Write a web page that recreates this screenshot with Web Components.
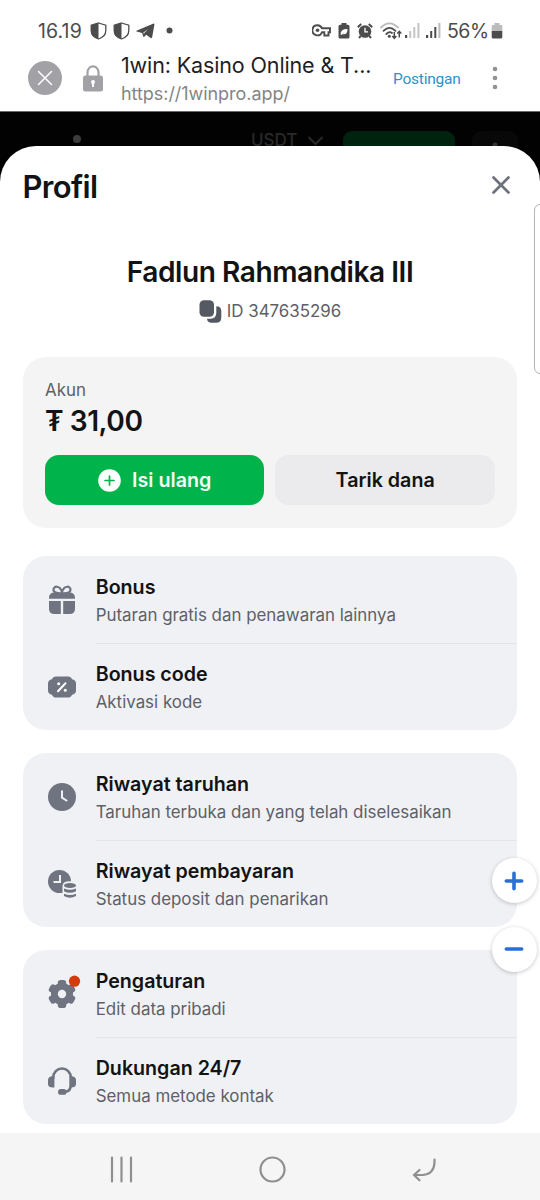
<!DOCTYPE html>
<html lang="id">
<head>
<meta charset="utf-8">
<title>Profil</title>
<style>
html,body{margin:0;padding:0}
body{width:540px;height:1200px;overflow:hidden;background:#fff;font-family:Inter,"Noto Sans",sans-serif;color:#121314}
</style>
</head>
<body>
<profile-app></profile-app>
<script>
function define(name, css, html) {
  const t = document.createElement('template');
  t.innerHTML = '<style>:host{display:block;box-sizing:border-box}*{box-sizing:border-box}svg{display:block;flex:none}' + css + '</style>' + html;
  customElements.define(name, class extends HTMLElement {
    constructor() {
      super();
      this.attachShadow({mode: 'open'}).appendChild(t.content.cloneNode(true));
    }
  });
}

define('status-bar', `
:host{height:48px;padding:14px 37px 0 38px}
.row{display:flex;align-items:center;height:33px;color:#4c4c4c;font-size:19.5px}
.time{width:52px;letter-spacing:.1px}
.pct{letter-spacing:-.5px;width:43px;white-space:nowrap}
svg{fill:#4c4c4c}
.sp{flex:1}
`, `<div class="row">
<span class="time">16.19</span>
<svg width="17" height="18" viewBox="0 0 17 18"><path d="M8.500 1 15.800 3.200V8.600C15.800 13 12.400 15.800 8.500 17 4.600 15.800 1.200 13 1.200 8.600V3.200Z" fill="none" stroke="#4c4c4c" stroke-width="1.300"/><path d="M8.500 1V17C4.600 15.800 1.200 13 1.200 8.600V3.200Z"/></svg>
<svg width="17" height="18" viewBox="0 0 17 18" style="margin-left:6px"><path d="M8.500 1 15.800 3.200V8.600C15.800 13 12.400 15.800 8.500 17 4.600 15.800 1.200 13 1.200 8.600V3.200Z" fill="none" stroke="#4c4c4c" stroke-width="1.300"/><path d="M8.500 1V17C4.600 15.800 1.200 13 1.200 8.600V3.200Z"/></svg>
<svg width="19" height="16" viewBox="0 0 19 16" style="margin-left:6px"><path d="M.6 8.600Q-.1 8 1 7.500L17 .7Q18.600.2 18.400 1.800L16.200 14Q15.800 15.800 14.300 14.800L10.200 11.800 8.300 13.700Q7.500 14.400 7.200 13.300L6.100 9.900ZM7.300 9.600 8 11.200 8.400 9.800 12.300 6.200Z" fill-rule="evenodd"/></svg>
<svg width="7" height="7" viewBox="0 0 7 7" style="margin-left:11px"><circle cx="3.500" cy="3.500" r="3"/></svg>
<span class="sp"></span>
<svg width="19" height="13" viewBox="0 0 19 13"><path d="M5.500 1.300a5 5 0 1 0 4.500 7h2.300V11.500h4.200V8.300H18V4.300H10A5 5 0 0 0 5.500 1.300Z" fill="none" stroke="#4c4c4c" stroke-width="1.900"/><circle cx="5.500" cy="6.300" r="1.800"/></svg>
<svg width="12" height="16" viewBox="0 0 12 16" style="margin-left:7px"><path d="M3.500 0h5v1.700H10q1.500 0 1.500 1.500V14q0 1.500-1.500 1.500H2Q.5 15.500.5 14V3.200q0-1.500 1.500-1.500h1.500Z"/><path d="M2.700 11.800Q1.900 6 9.500 6 9.700 12 4.600 11.200L7.300 8.300 3.500 12Z" fill="#fff"/></svg>
<svg width="16" height="16" viewBox="0 0 16 16" style="margin-left:7px"><circle cx="8" cy="8.500" r="6.300"/><path d="M.8 4.200 4.200 1M15.200 4.200 11.800 1M3.800 12.800 2 15M12.200 12.800 14 15" stroke="#4c4c4c" stroke-width="2"/><path d="M8 4.700V8.800H11" stroke="#fff" stroke-width="1.300" fill="none"/></svg>
<svg width="23" height="18" viewBox="0 0 23 18" style="margin-left:7px" ><g fill="none" stroke-linecap="round" stroke-width="1.800"><path d="M1 5.500Q9.500-2.700 18 5.500" stroke="#bbb"/><path d="M3.500 8.800Q9.500 3 15.500 8.800M6.300 12Q9.500 8.900 12 11" stroke="#4c4c4c"/></g><circle cx="9.300" cy="14.300" r="1.500"/><path d="M14.300 10v6M12.300 14l2 2.300 2-2.300M19.300 15.500V9.500M17.300 11.600l2-2.300 2 2.300" fill="none" stroke="#4c4c4c" stroke-width="1.500"/></svg>
<svg width="15" height="15" viewBox="0 0 15 15" style="margin-left:2px"><path d="M0 12h2.200v3H0Z"/><path d="M4.200 8h2v7h-2ZM8.300 4h2v11h-2ZM12.400 0h2v15h-2Z" fill="#c4c4c4"/></svg>
<svg width="15" height="15" viewBox="0 0 15 15" style="margin-left:6px"><path d="M0 12h2.200v3H0ZM4.200 8h2v7h-2ZM8.300 4h2v11h-2Z"/><path d="M12.400 0h2v15h-2Z" fill="#bbb"/></svg>
<span class="pct" style="margin-left:6px">56%</span>
<svg width="12" height="16" viewBox="0 0 12 16" style="margin-left:1px"><path d="M3.500 0h5v2H10q1.300 0 1.300 1.300V8H.7V3.300Q.7 2 2 2h1.500Z" fill="#bbb"/><path d="M.7 8H11.300v6q0 1.500-1.500 1.500H2.200Q.7 15.500.7 14Z"/></svg>
</div>`);

define('browser-bar', `
:host{height:64px;border-bottom:1px solid #6a6a6a}
.row{display:flex;align-items:center;height:60px;padding-left:28px}
.txt{margin-left:18px;width:272px;white-space:nowrap;padding-top:3px}
.t{font-size:21.500px;line-height:28px;color:#1e1e1e;letter-spacing:-.13px}
.u{font-size:18px;line-height:29px;color:#858585;letter-spacing:-.05px}
.p{font:15.500px/20px Roboto,sans-serif;color:#2b93ca;width:95px;letter-spacing:-.22px;padding-top:2px}
`, `<div class="row">
<svg width="34" height="34" viewBox="0 0 34 34"><circle cx="17" cy="17" r="17" fill="#a2a1a6"/><path d="M10.500 10.500l13 13M23.500 10.500l-13 13" stroke="#fff" stroke-width="1.500" stroke-linecap="round"/></svg>
<svg width="20" height="27" viewBox="0 0 20 27" style="margin-left:21px"><path d="M4.500 12V7.500a5.500 6.200 0 0 1 11 0V12" fill="none" stroke="#a2a1a6" stroke-width="2.200"/><rect y="10.500" width="20" height="16" rx="2.500" fill="#a2a1a6"/><circle cx="10" cy="17" r="2" fill="#fff"/><path d="M9 17h2v5H9Z" fill="#fff"/></svg>
<div class="txt"><div class="t">1win: Kasino Online &amp; T...</div><div class="u">https://1winpro.app/</div></div>
<div class="p">Postingan</div>
<svg width="8" height="24" viewBox="0 0 8 24" fill="#929292" style="margin-left:3px"><circle cx="4" cy="3" r="2.300"/><circle cx="4" cy="12" r="2.300"/><circle cx="4" cy="21" r="2.300"/></svg>
</div>`);

define('dimmed-header', `
:host{height:69px;background:#020202;overflow:hidden}
.row{display:flex;align-items:flex-start;padding:19px 22px 0 73px;height:69px}
.c{margin:0 0 0 170px;font-size:17px;line-height:19px;font-weight:500;color:#292929;width:56px}
.g{width:113px;height:44px;border-radius:9px;background:#00230f;margin-left:19px}
.b{width:46px;height:44px;border-radius:9px;background:#080808;margin-left:17px;display:flex;justify-content:center;padding-top:11px}
`, `<div class="row"><svg width="8" height="16" viewBox="0 0 8 16"><circle cx="4" cy="8" r="4" fill="#3c3c3c"/></svg><span class="c">USDT</span><svg width="17" height="18" viewBox="0 0 17 18"><path d="M1.500 6l7 7 7-7" fill="none" stroke="#292929" stroke-width="2"/></svg><span class="g"></span><span class="b"><svg width="6" height="6" viewBox="0 0 6 6"><circle cx="3" cy="3" r="2.500" fill="#333"/></svg></span></div>`);

define('account-card', `
:host{margin:0 22.600px 0 22.500px;height:171px;background:#f4f4f4;border-radius:23px;padding:20px 22.500px 0}
.l{font-size:16.900px;line-height:26px;color:#5d6067}
.a{font-size:28.100px;line-height:36px;font-weight:600;letter-spacing:-.45px}
.btns{display:flex;gap:11px;margin-top:16px}
.btn{flex:1;height:50.500px;border-radius:14px;display:flex;align-items:center;justify-content:center;font-size:19.700px;font-weight:600;background:#ebebed}
.btn.g{background:#00b34a;color:#f2fff6;gap:11px}
`, `<div class="l">Akun</div><div class="a">₮ 31,00</div>
<div class="btns"><div class="btn g"><svg width="23" height="23" viewBox="0 0 23 23"><circle cx="11.500" cy="11.500" r="11.300" fill="#fff"/><path d="M11.500 7v9M7 11.500h9" stroke="#00b34a" stroke-width="1.700" stroke-linecap="round"/></svg><span>Isi ulang</span></div><div class="btn"><span>Tarik dana</span></div></div>`);

define('menu-group', `
:host{margin:0 22.600px 0 22.500px;background:#f0f1f5;border-radius:23px;height:174px}
`, `<slot></slot>`);

define('menu-row', `
:host{height:87px;display:flex;padding-left:25px}
.ic{width:28px;height:88px;display:flex;align-items:center;flex:none}
.tx{margin-left:20.200px;flex:1;height:88.400px;padding-top:17.200px;white-space:nowrap}
:host([line]) .tx{border-bottom:1px solid #e4e5e9}
.t{font-size:19.650px;line-height:28px;font-weight:600}
.s{font-size:16.900px;line-height:29px;color:#5d6067}
`, `<div class="ic"><slot name="icon"></slot></div><div class="tx"><div class="t"><slot name="title"></slot></div><div class="s"><slot></slot></div></div>`);

const icons = {
gift: '<path d="M14 7.500C11 7.500 5.500 7 5.500 3.700 5.500 .2 11.500-1.500 14 6 16.500-1.500 22.500 .2 22.500 3.700 22.500 7 17 7.500 14 7.500Z" fill="none" stroke="#707480" stroke-width="2.200"/><path d="M6.500 6.500h15q5.500 0 5.500 5.500v.7H1V12Q1 6.500 6.500 6.500ZM1 15H12.800V28H6.500Q1 28 1 23ZM15.200 15H27v8q0 5-5.500 5H15.200Z"/>',
code: '<path d="M8 3.500H20Q23 3.500 24 6.300 28 7 28 10.500v7Q28 21 24 21.700 23 24.500 20 24.500H8Q5 24.500 4 21.700 0 21 0 17.500v-7Q0 7 4 6.300 5 3.500 8 3.500Z"/><path d="M10 18.200 17.500 10.200" stroke="#fff" stroke-width="2" stroke-linecap="round"/><circle cx="10.700" cy="10.800" r="1.500" fill="#fff"/><circle cx="17.300" cy="17.300" r="1.500" fill="#fff"/>',
clock: '<circle cx="14" cy="14" r="14"/><path d="M14 7.500V14.700L19.200 18" fill="none" stroke="#f0f1f5" stroke-width="2"/>',
pay: '<circle cx="11.500" cy="11.500" r="11.500"/><path d="M12 5V12H5.500" fill="none" stroke="#f0f1f5" stroke-width="2"/><path d="M14.500 16Q14.500 11.300 21.500 11.300T30 16V30H14.500Z" fill="#f0f1f5"/><ellipse cx="22" cy="15.500" rx="6" ry="2.500"/><path d="M16 18.500q6 2.500 12 0v2.700q-6 3-12 0ZM16 23.700q6 2.500 12 0v2.300q-6 3.500-12 0Z"/>',
gear: '<circle cx="14" cy="14" r="11"/><rect x="9.800" width="8.400" height="28" rx="2.800"/><rect x="9.800" width="8.400" height="28" rx="2.800" transform="rotate(60 14 14)"/><rect x="9.800" width="8.400" height="28" rx="2.800" transform="rotate(120 14 14)"/><circle cx="14" cy="14" r="4.200" fill="#f0f1f5"/><circle cx="26.500" cy="1.200" r="5.600" fill="#d43a0c"/>',
head: '<path d="M5.200 12V10.700a8.800 9.200 0 0 1 17.600 0V18Q22.800 24 17.500 24.800H14" fill="none" stroke="#707480" stroke-width="2.600"/><path d="M6.400 9V20.500Q0 21 0 17V13Q0 9 6.400 9ZM21.600 9V20.500Q28 21 28 17V13Q28 9 21.600 9Z"/><rect x="10" y="22" width="8.500" height="5.800" rx="2.900"/>'
};
customElements.define('menu-icon', class extends HTMLElement {
  constructor() { super(); this.attachShadow({mode: 'open'}); }
  connectedCallback() {
    this.shadowRoot.innerHTML = '<style>:host{display:block}svg{display:block;overflow:visible}</style><svg width="28" height="28" viewBox="0 0 28 28" fill="#707480">' + icons[this.getAttribute('name')] + '</svg>';
  }
});

define('profile-sheet', `
:host{position:relative;margin-top:-35.500px;height:987px;background:#fff;border-radius:36px 36px 0 0;padding-top:21px}
.head{display:flex;justify-content:space-between;align-items:center;height:40px;padding:0 30.500px 0 22.500px}
h1{margin:0;font-size:30.900px;line-height:40px;font-weight:600;letter-spacing:-.6px}
.name{text-align:center;font-size:28.100px;font-weight:600;line-height:36px;margin-top:47px;letter-spacing:-.45px;white-space:nowrap}
.id{display:flex;justify-content:center;align-items:center;gap:5px;height:26px;margin-top:8.500px;font-size:16.900px;color:#5d6067}
account-card{margin-top:32.900px}
.list{display:flex;flex-direction:column;gap:23px;margin-top:28px}
`, `<div class="head"><h1>Profil</h1><svg width="18" height="18" viewBox="0 0 18 18" style="margin-top:-4px"><path d="M1.500 1.500l15 15M16.500 1.500l-15 15" stroke="#6d717d" stroke-width="2.700" stroke-linecap="round"/></svg></div>
<div class="name">Fadlun Rahmandika III</div>
<div class="id"><svg width="23" height="23" viewBox="0 0 23 23" fill="#555962"><rect x=".5" y=".3" width="14.500" height="16.500" rx="4.500"/><path d="M17.300 6.300Q22.300 6.500 22.300 11V17.500Q22.300 22.800 17 22.800H12.500Q8.300 22.800 8 18.700H11.500Q17.300 18.700 17.300 13Z"/></svg><span>ID 347635296</span></div>
<account-card></account-card>
<div class="list">
<menu-group><menu-row line><menu-icon slot="icon" name="gift"></menu-icon><span slot="title">Bonus</span>Putaran gratis dan penawaran lainnya</menu-row>
<menu-row><menu-icon slot="icon" name="code"></menu-icon><span slot="title">Bonus code</span>Aktivasi kode</menu-row></menu-group>
<menu-group><menu-row line><menu-icon slot="icon" name="clock"></menu-icon><span slot="title">Riwayat taruhan</span>Taruhan terbuka dan yang telah diselesaikan</menu-row>
<menu-row><menu-icon slot="icon" name="pay"></menu-icon><span slot="title">Riwayat pembayaran</span>Status deposit dan penarikan</menu-row></menu-group>
<menu-group><menu-row line><menu-icon slot="icon" name="gear"></menu-icon><span slot="title">Pengaturan</span>Edit data pribadi</menu-row>
<menu-row><menu-icon slot="icon" name="head"></menu-icon><span slot="title">Dukungan 24/7</span>Semua metode kontak</menu-row></menu-group>
</div>`);

define('zoom-controls', `
:host{position:absolute;left:491.500px;top:858px;display:flex;flex-direction:column;gap:23.500px}
.z{width:45px;height:45px;border-radius:50%;background:#fff;box-shadow:0 1px 4px rgba(0,0,0,.22);display:flex;align-items:center;justify-content:center}
path{stroke:#2a6fd6;stroke-width:3.600;stroke-linecap:round}
`, `<div class="z"><svg width="20" height="20" viewBox="0 0 20 20"><path d="M10 2.300v15.400M2.300 10h15.400"/></svg></div><div class="z"><svg width="20" height="20" viewBox="0 0 20 20"><path d="M2.300 10h15.400"/></svg></div>`);

define('edge-handle', `:host{position:absolute;left:533.600px;top:203.600px;width:20px;height:170.500px;border:1.500px solid #b5b5b5;border-radius:6px;background:#fff}`, ``);

define('nav-bar', `
:host{height:68px;background:#f5f5f5;display:flex;align-items:center;padding:5px 0 0 110px}
svg{fill:none;stroke:#8f8f8f;stroke-width:2.200;stroke-linecap:round}
`, `<svg width="23" height="27" viewBox="0 0 23 27"><path d="M2 1.500v24M11.500 1.500v24M21 1.500v24"/></svg>
<svg width="27" height="27" viewBox="0 0 27 27" style="margin-left:126px"><circle cx="13.500" cy="13.500" r="12"/></svg>
<svg width="25" height="25" viewBox="0 0 25 25" style="margin-left:126px"><path d="M22.500 2.500V5.500Q22 17 11 18H2M7.500 13 2 18l5.500 5.300"/></svg>`);

define('profile-app', `
:host{position:relative;width:540px;height:1200px;overflow:hidden;display:flex;flex-direction:column}
:host>*{flex:none}
`, `<status-bar></status-bar><browser-bar></browser-bar><dimmed-header></dimmed-header><profile-sheet></profile-sheet><nav-bar></nav-bar><zoom-controls></zoom-controls><edge-handle></edge-handle>`);
</script>
</body>
</html>
